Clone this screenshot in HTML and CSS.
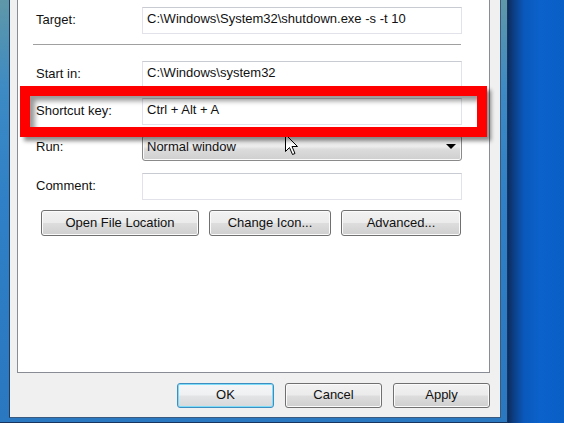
FILE: index.html
```html
<!DOCTYPE html>
<html lang="en">
<head>
    <meta charset="UTF-8">
    <meta name="viewport" content="width=device-width, initial-scale=1.0">
    <title>Shortcut Properties</title>
    <link rel="stylesheet" href="styles.css">
</head>
<body>

<div class="window">
    <div class="dialog">
        <div class="page">
            <div class="row">
                <span class="label">Target:</span>
                <div class="field">C:\Windows\System32\shutdown.exe -s -t 10</div>
            </div>
            <div class="separator"></div>
            <div class="row">
                <span class="label">Start in:</span>
                <div class="field">C:\Windows\system32</div>
            </div>
            <div class="row">
                <span class="label">Shortcut key:</span>
                <div class="field">Ctrl + Alt + A</div>
            </div>
            <div class="row row-run">
                <span class="label">Run:</span>
                <div class="combo">Normal window <span class="arrow"></span></div>
            </div>
            <div class="row">
                <span class="label">Comment:</span>
                <div class="field"></div>
            </div>
            <div class="actions">
                <button class="btn btn-open">Open File Location</button>
                <button class="btn btn-icon">Change Icon...</button>
                <button class="btn btn-adv">Advanced...</button>
            </div>

            <!-- mouse pointer, under the red frame -->
            <svg class="cursor" width="14" height="22" viewBox="0 0 14 22">
                <path d="M0.5 0.5 L0.5 17.5 L4.5 13.5 L7.5 20.5 L10 19.5 L7 12.5 L12.5 12.5 Z" fill="#fff" stroke="#000" stroke-width="1"/>
            </svg>
            <div class="highlight"></div>
        </div>

        <div class="footer">
            <button class="btn btn-default">OK</button>
            <button class="btn">Cancel</button>
            <button class="btn">Apply</button>
        </div>
    </div>
</div>

</body>
</html>
```

FILE: styles.css
```css
body {
    margin: 0;
    width: 564px;
    height: 423px;
    overflow: hidden;
    font-family: "Liberation Sans", Arial, sans-serif;
    font-size: 13px;
    color: #111;
    /* desktop behind the window */
    background: linear-gradient(to right, #0d2c5e 0, #0d2c5e 508px, #0c3f86 514px, #0a58bb 524px, #0b62cb 540px, #0a5fc6 564px);
}
.window {
    width: 508px;
    height: 423px;
    box-sizing: border-box;
    display: flex;
    padding: 0 7px 5px 9px;
    /* glass frame */
    background: linear-gradient(to bottom, #5f98a8 0, #3d8ac4 90px, #2f80c6 200px, #2a78c0 100%);
    box-shadow: inset -1px 0 0 #16345e, inset 0 -1px 0 #16345e;
}
.dialog {
    flex: 1;
    display: flex;
    flex-direction: column;
    background-color: #f0f0f0;
    padding: 0 10px 0 7px;
    border-left: 1px solid #1f3b5e;
    border-right: 1px solid #3a5a80;
    border-bottom: 1px solid #3a5a80;
}
.page {
    position: relative;
    height: 373px;
    box-sizing: border-box;
    background-color: #fff;
    border: 1px solid #898c95;
    border-top: none;
    padding: 7px 27px 0 18px;
}
.row {
    display: grid;
    grid-template-columns: 106px 1fr;
    align-items: center;
    height: 27px;
    margin-bottom: 10px;
}
.row-run {
    height: 26px;
    margin-bottom: 12px;
}
.label {
    padding-bottom: 3px;
}
.field {
    height: 27px;
    box-sizing: border-box;
    border: 1px solid #e2e3ea;
    border-top-color: #c9cbd3;
    padding: 0 4px;
    line-height: 22px;
    white-space: nowrap;
    overflow: hidden;
}
.combo {
    position: relative;
    height: 26px;
    box-sizing: border-box;
    border: 1px solid #8a8a8a;
    border-radius: 3px;
    padding: 0 4px;
    line-height: 22px;
    background: linear-gradient(#f2f2f2 0%, #ebebeb 45%, #dcdcdc 55%, #cfcfcf 100%);
    box-shadow: inset 0 0 0 1px #fafafa;
}
.arrow {
    position: absolute;
    right: 5px;
    top: 8px;
    border-left: 5px solid transparent;
    border-right: 5px solid transparent;
    border-top: 5px solid #000;
}
.separator {
    height: 1px;
    background-color: #a0a0a0;
    border-bottom: 1px solid #fff;
    margin: 9px 1px 15px -3px;
}
.actions {
    display: flex;
    gap: 10px;
    margin-left: 5px;
}
.btn {
    font-family: "Liberation Sans", Arial, sans-serif;
    font-size: 13px;
    color: #111;
    height: 26px;
    padding: 0 0 2px;
    border: 1px solid #707070;
    border-radius: 3px;
    background: linear-gradient(#f2f2f2 0%, #ebebeb 48%, #dddddd 52%, #cfcfcf 100%);
    box-shadow: inset 0 0 0 1px #fbfbfb;
}
.btn-open {
    width: 158px;
}
.btn-icon {
    width: 122px;
}
.btn-adv {
    width: 120px;
}
.footer {
    display: flex;
    justify-content: flex-end;
    gap: 11px;
    padding-top: 10px;
}
.footer .btn {
    width: 97px;
    height: 25px;
}
.btn-default {
    border-color: #3c8fc0;
    box-shadow: inset 0 0 0 1px #7fdcf8;
    background: linear-gradient(#f4f6f8 0%, #eef0f2 48%, #e2e4e6 52%, #d6d8da 100%);
}
.cursor {
    position: absolute;
    left: 267px;
    top: 134px;
}
/* red frame drawn over the screenshot */
.highlight {
    position: absolute;
    left: 2px;
    top: 86px;
    width: 467px;
    height: 51px;
    box-sizing: border-box;
    border: 10px solid #fe0000;
    box-shadow: 4px 4px 4px rgba(0, 0, 0, 0.45), inset 5px 5px 5px rgba(0, 0, 0, 0.4);
}
```
